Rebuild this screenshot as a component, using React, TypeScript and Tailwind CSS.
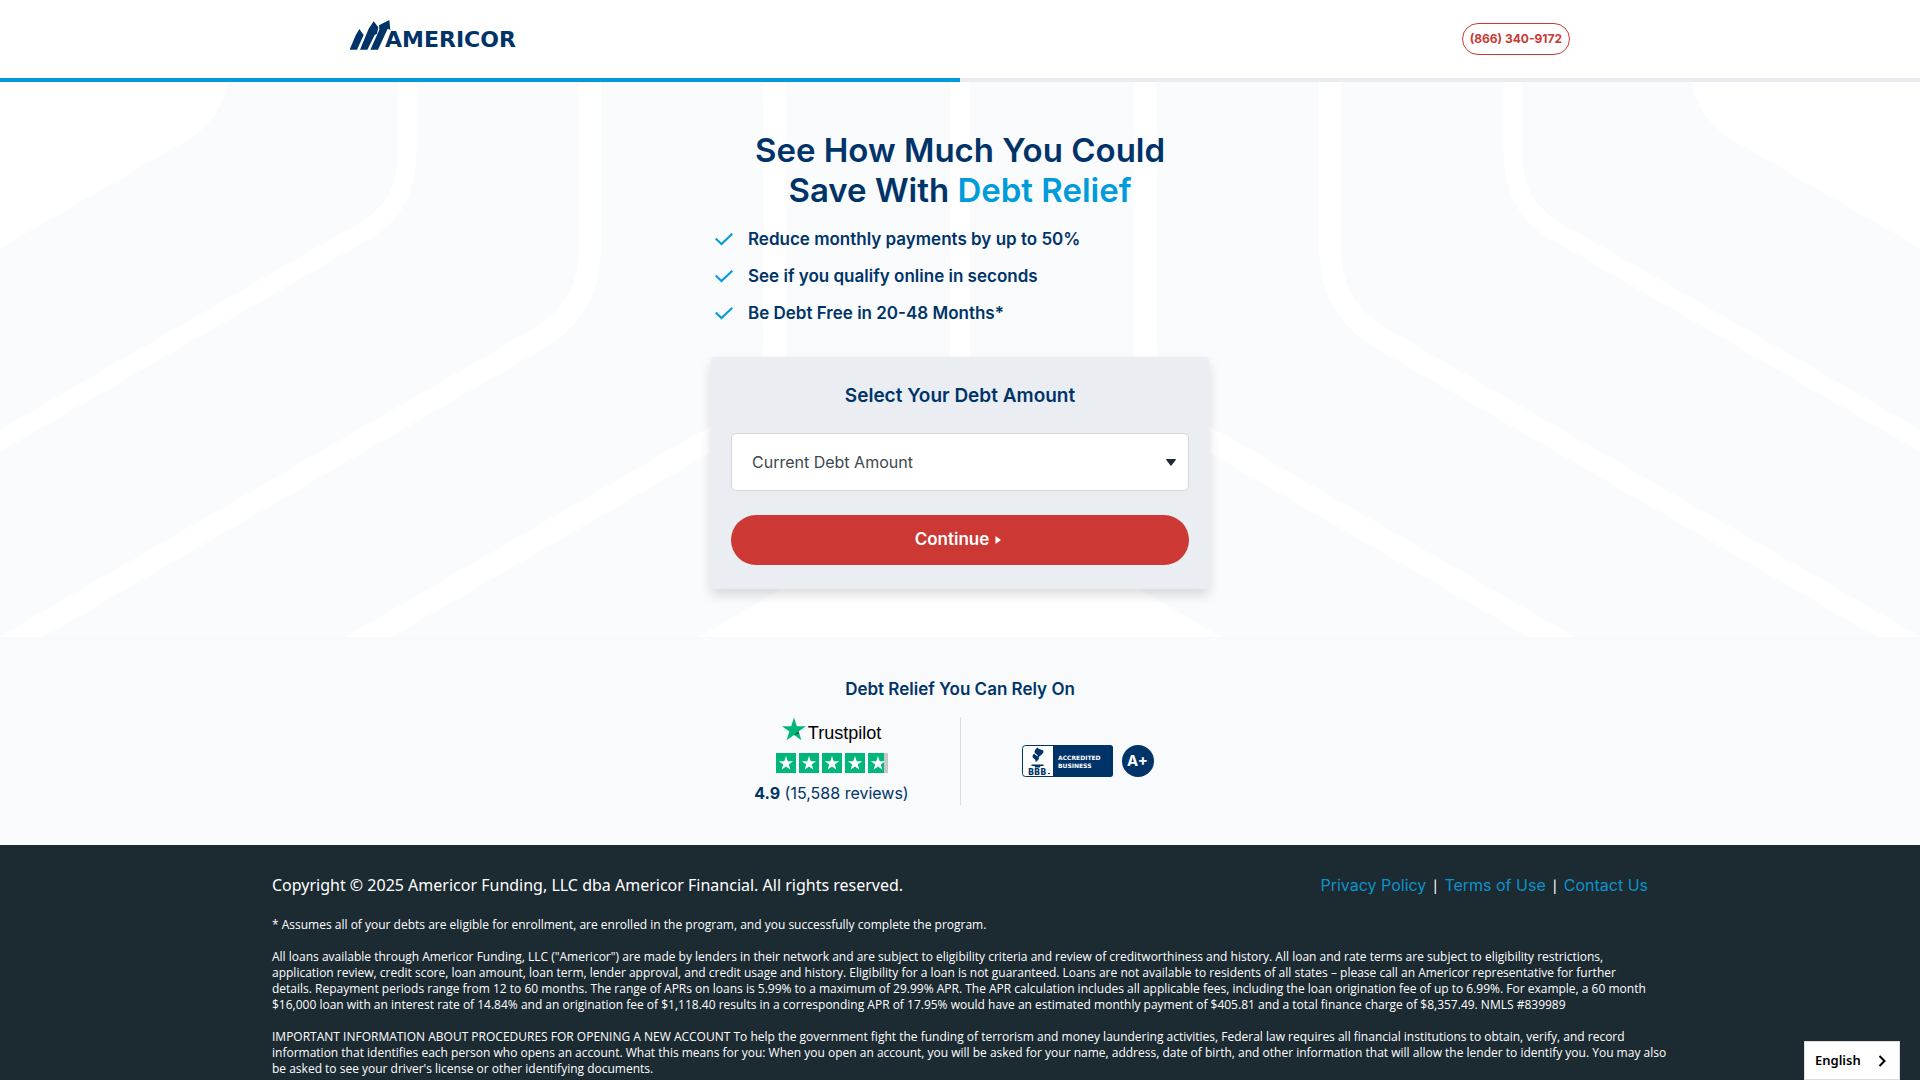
const benefits = [
  'Reduce monthly payments by up to 50%',
  'See if you qualify online in seconds',
  'Be Debt Free in 20-48 Months*',
];

const STAR = 'M12 0l2.8 8.7H24l-7.4 5.4 2.8 8.7L12 17.4l-7.4 5.4 2.8-8.7L0 8.7h9.2z';

function HeroBackground() {
  const half = (
    <g fill="none" stroke="#fff">
      <path fill="#fff" stroke="none" d="M0 0H228Q222 38 184 60L0 166Z" />
      <path strokeWidth="19" d="M407 -10V68C407 104 397 130 364 149L-20 370" />
      <path strokeWidth="22" d="M590 -10V165C590 204 576 234 541 255L0 567" />
      <path strokeWidth="23" d="M775 -10V265C775 298 758 329 725 349L330 577" />
    </g>
  );
  return (
    <svg
      className="absolute inset-0 h-full w-full"
      viewBox="0 0 1920 555"
      preserveAspectRatio="xMidYMid slice"
      aria-hidden="true"
    >
      {half}
      <g transform="matrix(-1 0 0 1 1920 0)">{half}</g>
      <path stroke="#fff" strokeWidth="19" d="M960 0V400" />
      <path fill="#fff" d="M699 555L960 403L1221 555Z" />
    </svg>
  );
}

function AmericorLogo() {
  return (
    <a href="#" className="flex items-end text-[#003469]" aria-label="Americor home">
      <svg className="h-[30px] w-[41px]" viewBox="60 59 123 90" fill="currentColor" aria-hidden="true">
        <path d="M59 148L77 105L88 86L101 104L81 148Z" />
        <path d="M90 148L116 85L131 63L145 81L141 100L134 104L112 148Z" />
        <path d="M121 148L148 88L147 75L178 59L181 89L173 85L144 148Z" />
      </svg>
      <span className="-ml-1.5 font-[DejaVu_Sans,sans-serif] text-[22px] leading-5 font-semibold">AMERICOR</span>
    </a>
  );
}

function TrustpilotLogo() {
  return (
    <div className="flex h-6 items-end">
      <svg className="h-6 w-6" viewBox="0 0 24 23" aria-hidden="true">
        <path fill="#00b67a" d={STAR} />
        <path fill="#005128" d="M17.2 16l-.6-1.9L12 17.4z" />
      </svg>
      <span className="ml-0.5 font-[Liberation_Sans,sans-serif] text-lg leading-4 text-black">Trustpilot</span>
    </div>
  );
}

function RatingStars() {
  return (
    <div className="flex gap-[3px]" role="img" aria-label="Rated 4.9 out of 5">
      {[0, 1, 2, 3, 4].map((n) => (
        <svg key={n} className="h-5 w-5" viewBox="0 0 20 20" aria-hidden="true">
          <path fill="#c8c8c8" d="M0 0h20v20H0z" />
          <path fill="#00b67a" d={n === 4 ? 'M0 0h16v20H0z' : 'M0 0h20v20H0z'} />
          <path fill="#fff" transform="translate(2.800 3) scale(.6)" d={STAR} />
        </svg>
      ))}
    </div>
  );
}

function BbbBadge() {
  return (
    <svg className="h-8 w-[91px]" viewBox="0 0 91 32" role="img" aria-label="BBB Accredited Business">
      <rect x=".5" y=".5" width="90" height="31" rx="3" fill="#fff" stroke="#003469" />
      <path fill="#003469" d="M31 0h57a3 3 0 0 1 3 3v26a3 3 0 0 1-3 3H31z" />
      <path fill="#003469" d="M15.500 2.500c-2 2-3.500 3-2.800 5 .5 1.500 3.800 2 3.300 5 3-2.500 6.300-4.500 5.300-6.800-.7-1.200-4.600-1-5.800-3.200z" />
      <path fill="#003469" d="M12.200 8.500c-1.800 1.800-2.200 3-1.200 4.300 1 1.200 3 1.600 2.600 4.200 2.200-1.400 4-3 3.200-4.800-.8-1.500-4-1.700-4.600-3.700z" />
      <path fill="#003469" d="M9.500 19.500h12v1.500h-3l-.7 1.500h-4.600l-.7-1.500h-3z" />
      <text x="6" y="29.500" fontSize="8" fontWeight="700" fill="#003469" fontFamily="DejaVu Sans, sans-serif">BBB</text>
      <path fill="#003469" d="M26 28h2v1h-2z" />
      <g fill="#fff" fontSize="6" fontWeight="700" fontFamily="DejaVu Sans, sans-serif">
        <text x="36" y="15">ACCREDITED</text>
        <text x="36" y="23">BUSINESS</text>
      </g>
    </svg>
  );
}

export default function App() {
  return (
    <div className="flex min-h-screen flex-col bg-[#f8fafc] font-[Inter,sans-serif] text-[#003469]">
      <header className="bg-white">
        <div className="mx-auto flex h-[78px] max-w-[1220px] items-center justify-between">
          <div className="pb-2">
            <AmericorLogo />
          </div>
          <a
            href="tel:+18663409172"
            className="flex h-8 items-center rounded-full border border-[#cc3834] px-[7px] text-xs font-bold text-[#cc3834]"
          >
            (866) 340-9172
          </a>
        </div>
        <div className="h-1 bg-[#eaeef3]">
          <div className="h-full w-1/2 bg-[#009cda]" />
        </div>
      </header>

      <main>
        <section className="relative overflow-hidden bg-[#fafbfd] py-12">
          <HeroBackground />
          <div className="relative mx-auto max-w-[498px]">
            <h1 className="text-center text-[33px] leading-10 font-semibold">
              See How Much You Could
              <br />
              Save With <span className="text-[#009cda]">Debt Relief</span>
            </h1>
            <ul className="mt-[11px] pl-1">
              {benefits.map((b) => (
                <li key={b} className="flex h-[37px] items-center gap-[15px] text-[17px] font-semibold">
                  <svg className="h-[13px] w-[18px]" viewBox="0 0 18 13" fill="none" stroke="#009cda" strokeWidth="2" aria-hidden="true">
                    <path d="M.7 5.500L6.500 11L17.300 .7" />
                  </svg>
                  {b}
                </li>
              ))}
            </ul>

            <form
              className="mt-[25px] rounded bg-[#eaeef3] px-5 pt-[25px] pb-6 shadow-[0_6px_12px_rgba(0,0,0,0.14)]"
              onSubmit={(e) => e.preventDefault()}
            >
              <label htmlFor="debt" className="block text-center text-[19px] leading-7 font-semibold">
                Select Your Debt Amount
              </label>
              <div className="relative mt-[23px]">
                <select
                  id="debt"
                  className="h-[58px] w-full appearance-none rounded-[5px] border border-[#d4d6d9] bg-white px-5 text-base text-[#3c474e]"
                >
                  <option>Current Debt Amount</option>
                </select>
                <svg className="pointer-events-none absolute top-[26px] right-[13px] h-[7px] w-[10px]" viewBox="0 0 10 7" fill="#1c2a32" aria-hidden="true">
                  <path d="M.5 0h9q.6.300.200 1L5.500 6.500q-.5.500-1 0L.300 1Q-.1.300.5 0z" />
                </svg>
              </div>
              <button
                type="submit"
                className="mt-6 flex h-[50px] w-full items-center justify-center gap-[6px] rounded-full bg-[#cc3834] pr-1 text-[17px] font-semibold text-white"
              >
                Continue
                <svg className="h-2 w-[6px]" viewBox="0 0 6 8" fill="currentColor" aria-hidden="true">
                  <path d="M.5 0v8L6 4z" />
                </svg>
              </button>
            </form>
          </div>
        </section>

        <section className="pt-10 pb-10">
          <h2 className="text-center text-[17px] leading-6 font-semibold">Debt Relief You Can Rely On</h2>
          <div className="mx-auto mt-4 grid max-w-[514px] grid-cols-2">
            <div className="flex h-[88px] flex-col items-center">
              <TrustpilotLogo />
              <div className="mt-3">
                <RatingStars />
              </div>
              <p className="mt-2 text-base leading-6">
                <b>4.9</b> (15,588 reviews)
              </p>
            </div>
            <div className="flex items-center justify-center gap-[9px] border-l border-[#d9dde1] pr-[3px]">
              <BbbBadge />
              <span className="flex h-8 w-8 items-center justify-center rounded-full bg-[#003469] text-[15px] font-bold text-white">
                A+
              </span>
            </div>
          </div>
        </section>
      </main>

      <footer className="grow bg-[#1c2a32] pt-7 text-white">
        <div className="mx-auto max-w-[1376px]">
          <div className="mb-5 flex items-center justify-between leading-6">
            <p className="font-[Noto_Sans,sans-serif] text-base">
              Copyright © 2025 Americor Funding, LLC dba Americor Financial. All rights reserved.
            </p>
            <nav className="flex gap-[7px] text-base">
              <a href="#" className="text-[#0d93cb]">Privacy Policy</a>
              <span className="font-[Lato,sans-serif]">|</span>
              <a href="#" className="text-[#0d93cb]">Terms of Use</a>
              <span className="font-[Lato,sans-serif]">|</span>
              <a href="#" className="text-[#0d93cb]">Contact Us</a>
            </nav>
          </div>
          <div className="space-y-4 font-[Open_Sans,sans-serif] text-xs leading-4">
            <p>
              * Assumes all of your debts are eligible for enrollment, are enrolled in the program, and you
              successfully complete the program.
            </p>
            <p>
              All loans available through Americor Funding, LLC ("Americor") are made by lenders in their network
              and are subject to eligibility criteria and review of creditworthiness and history. All loan and rate
              terms are subject to eligibility restrictions, application review, credit score, loan amount, loan
              term, lender approval, and credit usage and history. Eligibility for a loan is not guaranteed. Loans
              are not available to residents of all states – please call an Americor representative for further
              details. Repayment periods range from 12 to 60 months. The range of APRs on loans is 5.99% to a
              maximum of 29.99% APR. The APR calculation includes all applicable fees, including the loan
              origination fee of up to 6.99%. For example, a 60 month $16,000 loan with an interest rate of 14.84%
              and an origination fee of $1,118.40 results in a corresponding APR of 17.95% would have an estimated
              monthly payment of $405.81 and a total finance charge of $8,357.49. NMLS #839989
            </p>
            <p className="-mr-6">
              IMPORTANT INFORMATION ABOUT PROCEDURES FOR OPENING A NEW ACCOUNT To help the government fight the
              funding of terrorism and money laundering activities, Federal law requires all financial institutions
              to obtain, verify, and record information that identifies each person who opens an account. What this
              means for you: When you open an account, you will be asked for your name, address, date of birth, and
              other information that will allow the lender to identify you. You may also be asked to see your
              driver's license or other identifying documents.
            </p>
          </div>
        </div>
      </footer>

      <button
        type="button"
        className="fixed right-5 bottom-0 flex h-[39px] w-24 items-center justify-between border border-[#dcdcdc] bg-white pr-[13px] pl-2.5 font-[Noto_Sans,sans-serif] text-[13px] font-semibold text-black"
      >
        English
        <svg className="h-3 w-2" viewBox="0 0 8 12" fill="none" stroke="currentColor" strokeWidth="2" aria-hidden="true">
          <path d="M1.500 1L6.500 6L1.500 11" />
        </svg>
      </button>
    </div>
  );
}
